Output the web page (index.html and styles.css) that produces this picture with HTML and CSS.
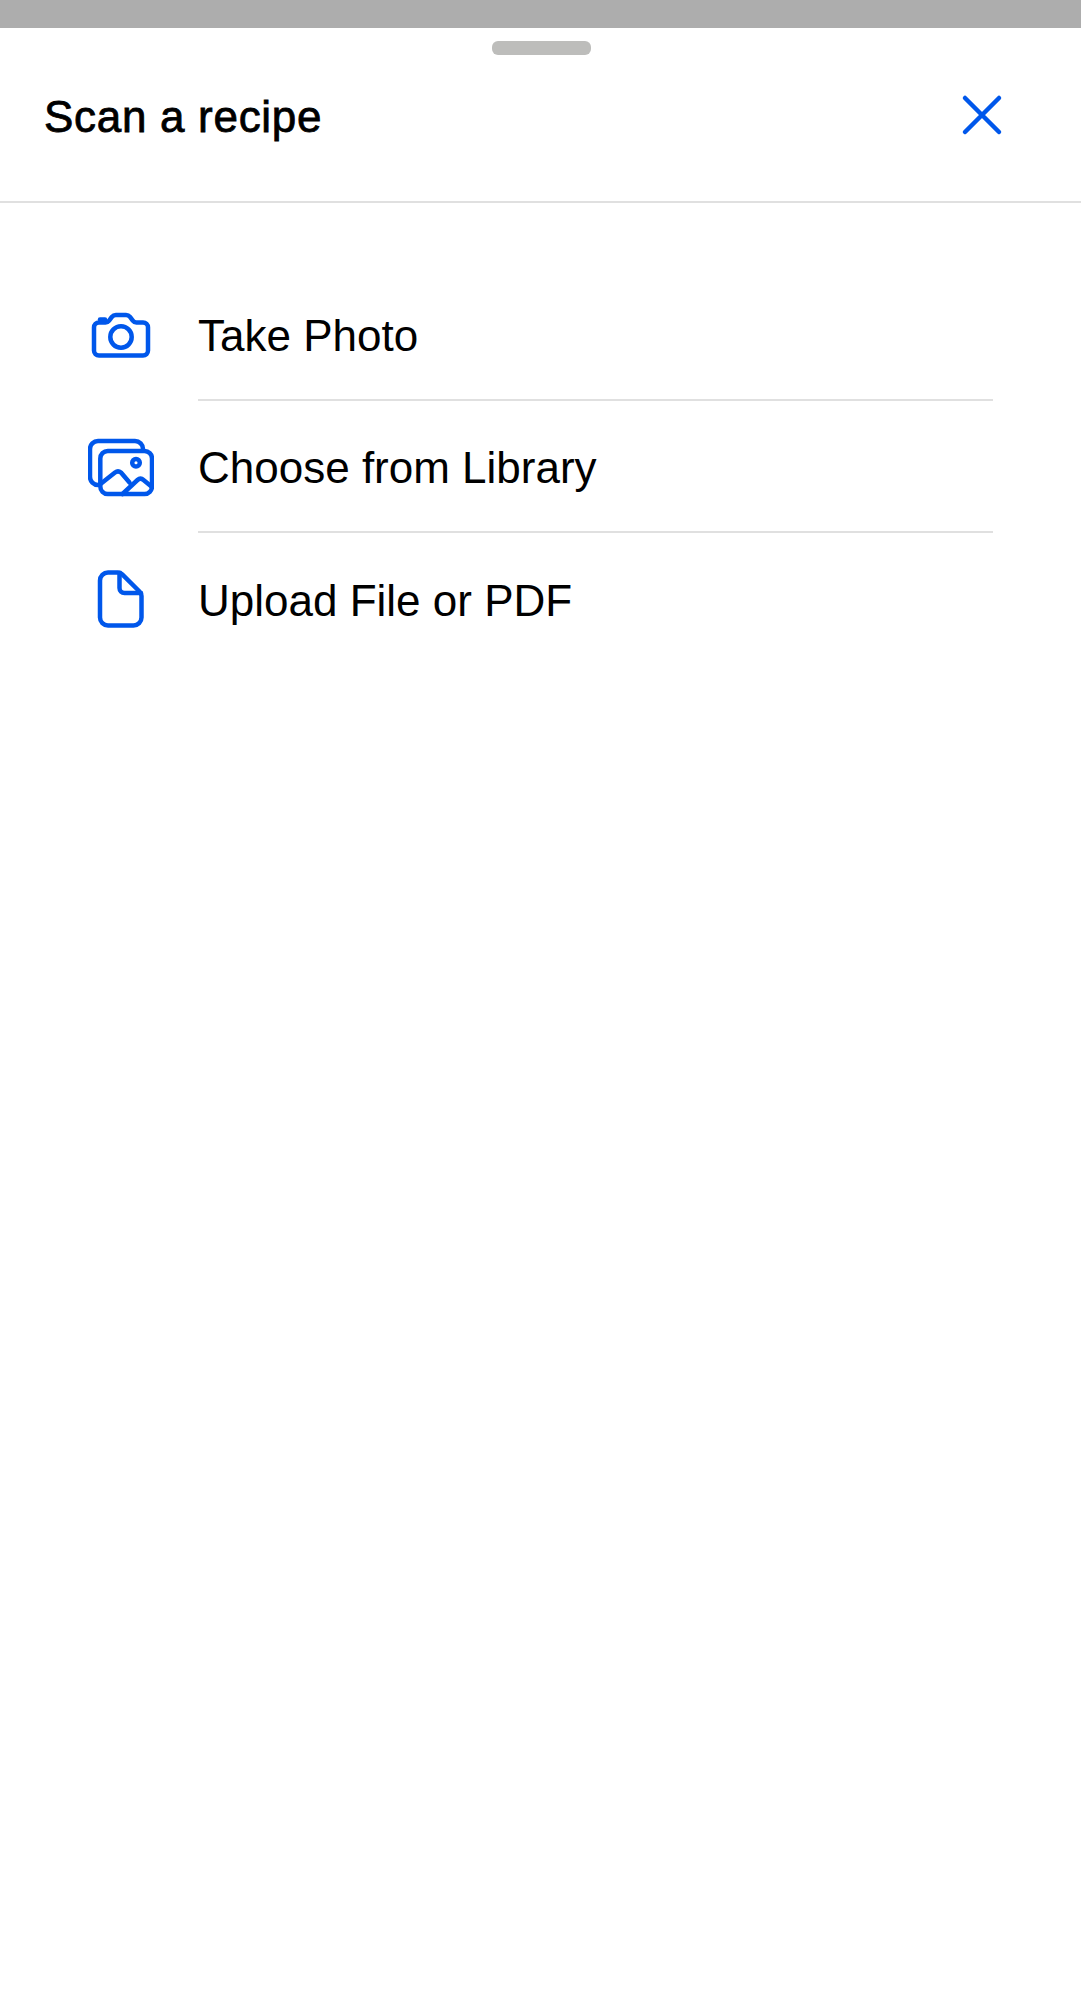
FILE: index.html
```html
<!DOCTYPE html>
<html lang="en">
<head>
    <meta charset="UTF-8">
    <meta name="viewport" content="width=device-width, initial-scale=1.0">
    <title>Scan a recipe</title>
    <link rel="stylesheet" href="styles.css">
</head>
<body>
    <div class="backdrop"></div>

    <div class="sheet">
        <div class="handle"></div>

        <div class="sheet-header">
            <h1 class="sheet-title">Scan a recipe</h1>
            <button class="close-btn" aria-label="Close">
                <svg class="icon-close" viewBox="0 0 44 44">
                    <path d="M5 5 L39 39 M39 5 L5 39"/>
                </svg>
            </button>
        </div>

        <ul class="options">
            <li class="option">
                <svg class="option-icon" viewBox="0 0 66 66">
                    <path d="M6 25.500 a5 5 0 0 1 5-5 H17.500 c1.500 0 2.700-.6 3.600-1.800 l2.800-3.800 c1-1.300 2.400-2 4-2 H38 c1.600 0 3 .7 4 2 l2.800 3.800 c.9 1.200 2.100 1.800 3.600 1.800 H55 a5 5 0 0 1 5 5 V48.500 a5 5 0 0 1-5 5 H11 a5 5 0 0 1-5-5 Z"/>
                    <path d="M12 17.500 H17"/>
                    <circle cx="33" cy="35" r="10.700"/>
                </svg>
                <div class="option-body"><span class="option-label">Take Photo</span></div>
            </li>
            <li class="option">
                <svg class="option-icon" viewBox="0 0 66 66">
                    <path d="M55 16 V15 a8 8 0 0 0-8-8 H10 a8 8 0 0 0-8 8 V43 a8 8 0 0 0 8 8"/>
                    <rect x="12.300" y="17" width="51.700" height="43" rx="7.500"/>
                    <circle cx="48" cy="28.700" r="3.800"/>
                    <path d="M12.500 50 L27 38.500 c2-1.500 4-1.500 6 0 L41.500 48.500"/>
                    <path d="M34.500 60 L49.500 46 c2-1.800 4-1.800 6 0 L64 53"/>
                </svg>
                <div class="option-body"><span class="option-label">Choose from Library</span></div>
            </li>
            <li class="option">
                <svg class="option-icon" viewBox="0 0 66 66">
                    <path d="M20 6.500 H30 c1.600 0 3 .6 4 1.700 L51.500 25.500 c1.300 1.300 2 3 2 4.500 V51.500 a8 8 0 0 1-8 8 H20 a8 8 0 0 1-8-8 V14.500 a8 8 0 0 1 8-8 Z"/>
                    <path d="M31.500 7 V22 a5 5 0 0 0 5 5 H53"/>
                </svg>
                <div class="option-body option-body-last"><span class="option-label">Upload File or PDF</span></div>
            </li>
        </ul>
    </div>
</body>
</html>
```

FILE: styles.css
```css
* {
    box-sizing: border-box;
}

html, body {
    height: 100%;
}

body {
    margin: 0;
    display: flex;
    flex-direction: column;
    font-family: "Liberation Sans", Arial, sans-serif;
    background-color: #fff;
    color: #000;
}

.backdrop {
    height: 28px;
    background-color: #adadad;
}

.sheet {
    flex: 1;
    background: white;
}

.handle {
    width: 99px;
    height: 14px;
    margin: 13px 0 0 492px;
    border-radius: 6px;
    background-color: #bdbdbb;
}

.sheet-header {
    display: flex;
    align-items: center;
    justify-content: space-between;
    height: 148px;
    padding: 0 77px 26px 44px;
    border-bottom: 2px solid #e0e0e0;
}

.sheet-title {
    margin: 0;
    padding-top: 3px;
    font-size: 44px;
    font-weight: normal;
    letter-spacing: 0.7px;
    line-height: 44px;
    -webkit-text-stroke: 0.8px #000;
}

.close-btn {
    width: 44px;
    height: 44px;
    padding: 0;
    border: none;
    background: none;
    cursor: pointer;
}

.icon-close {
    display: block;
    width: 44px;
    height: 44px;
    fill: none;
    stroke: #0057eb;
    stroke-width: 4.5;
    stroke-linecap: round;
}

.options {
    list-style: none;
    margin: 66px 0 0;
    padding: 0 88px;
}

.option {
    display: flex;
    align-items: center;
    gap: 44px;
    height: 132px;
}

.option-icon {
    flex: none;
    width: 66px;
    height: 66px;
    fill: none;
    stroke: #0057eb;
    stroke-width: 4.5;
    stroke-linecap: round;
    stroke-linejoin: round;
}

.option-body {
    flex: 1;
    display: flex;
    align-items: center;
    height: 100%;
    padding-top: 4px;
    border-bottom: 2px solid #e0e0e0;
}

.option-body-last {
    border-bottom: none;
}

.option-label {
    font-size: 44px;
    line-height: 48px;
}
```
